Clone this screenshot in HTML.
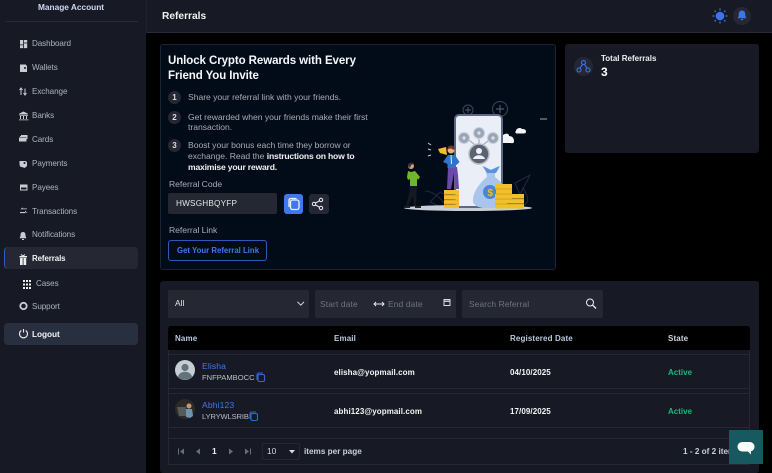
<!DOCTYPE html>
<html><head><meta charset="utf-8"><style>
*{box-sizing:border-box;margin:0;padding:0}
html,body{width:772px;height:473px;overflow:hidden;background:#000;font-family:"Liberation Sans",sans-serif;color:#fff}
.a{position:absolute}
.t{position:absolute;white-space:nowrap;line-height:12px}
.n{font-size:8.1px;color:#aeb3bf;left:32px;letter-spacing:-.08px}
svg{position:absolute;overflow:visible}
.g{font-size:8.6px;color:#a9acb4;letter-spacing:-.03px;left:188px}
.g b{letter-spacing:-.2px;color:#f2f2f2}
.num{position:absolute;left:168px;width:13px;height:13px;border-radius:50%;background:#252833;font-size:8px;font-weight:bold;line-height:13px;text-align:center;color:#ddd}
.th{font-size:8px;font-weight:bold;letter-spacing:.13px;color:#b9c8de}
.td{font-size:8px;font-weight:bold;color:#f4f4f4;letter-spacing:.08px}
.act{font-size:8px;font-weight:bold;color:#1fb57f}
</style></head><body>
<div class="a" style="left:0;top:0;width:146px;height:473px;background:#171a24"></div>
<div class="a" style="left:146px;top:0;width:626px;height:33px;background:#171a24;border-bottom:1px solid #2a2d38;border-left:1px solid #1f222c"></div>
<div class="a" style="left:146px;top:33px;width:626px;height:440px;background:#000"></div>
<div class="a" style="left:5px;top:21px;width:133px;height:1px;background:#282b36"></div>
<div class="t" style="left:38px;top:1px;font-size:8.3px;font-weight:bold;color:#cfd8f5;letter-spacing:0">Manage Account</div>

<div class="t n" style="top:38px">Dashboard</div>
<div class="t n" style="top:62px">Wallets</div>
<div class="t n" style="top:86px">Exchange</div>
<div class="t n" style="top:110px">Banks</div>
<div class="t n" style="top:134px">Cards</div>
<div class="t n" style="top:158px">Payments</div>
<div class="t n" style="top:182px">Payees</div>
<div class="t n" style="top:206px">Transactions</div>
<div class="t n" style="top:229px">Notifications</div>
<div class="a" style="left:4px;top:247px;width:134px;height:22px;background:#252833;border-radius:4px;border-left:1.5px solid #2f5fc0"></div>
<div class="t n" style="top:253px;color:#f2f2f2;font-weight:bold;font-size:7.9px">Referrals</div>
<div class="t n" style="top:278px;left:36px">Cases</div>
<div class="t n" style="top:301px">Support</div>
<div class="a" style="left:4px;top:323px;width:134px;height:22px;background:#283040;border-radius:4px"></div>
<div class="t n" style="top:328px;color:#f2f2f2;font-weight:bold;font-size:8.3px">Logout</div>

<svg style="left:0;top:0" width="146" height="350" fill="#c9ccd4">
<path d="M20 40h3.2v4.5H20zM24 40h3.2v2.6H24zM20 45.300h3.2v2.8H20zM24 43.400h3.2v4.7H24z"/>
<path d="M20 64.500h6v1h1v6.500h-7z"/><circle cx="25" cy="68" r="1" fill="#171a24"/>
<path d="M21 95v-6.500M19.500 90l1.500-2 1.500 2M25 88.500v6.500M23.500 93l1.500 2 1.500-2" fill="none" stroke="#c9ccd4" stroke-width="1"/>
<path d="M23.500 111.500l4.500 2.300v.7h-9v-.7zM19.500 115h8.500v.8h-8.500zM20 116h1v3h-1zM23 116h1v3h-1zM26 116h1v3h-1zM19 119.500h9.500v.8H19z"/>
<path d="M20 136h7v1h-7zM19 137.500h7.500v4H19z"/><path d="M21 135h6.500v4h-1v-3H21z"/>
<path d="M19.500 161h6l1.500 1v4.500h-1l-1 1.500-5-1.500-.5-2.500z"/><circle cx="24.500" cy="163" r="1" fill="#171a24"/>
<path d="M20 184.500h7.500v6H20z"/><rect x="21" y="187.500" width="5.500" height="2" fill="#171a24"/>
<path d="M20 212h5v-1.300l2.500 2-2.500-.2v.6h-5zM27 208.500h-4.500v-1.300l-2 2h6.500z"/>
<path d="M23 232c-2 0-2.500 1.500-2.500 3.200 0 1.800-.8 2.300-.8 3h6.600c0-.7-.8-1.200-.8-3 0-1.700-.5-3.200-2.500-3.200zM22 239h2v1h-2z"/>
<path d="M20 258h2.700v7H20zM23.500 258h2.700v7h-2.700zM19.500 256h7.500v1.500h-7.500z" fill="#eee"/>
<path d="M21 254.500l2 1.500 2-1.500" fill="none" stroke="#eee"/>
<g fill="#eee"><rect x="23" y="280" width="2" height="2"/><rect x="26" y="280" width="2" height="2"/><rect x="29" y="280" width="2" height="2"/><rect x="23" y="283.500" width="2" height="2"/><rect x="26" y="283.500" width="2" height="2"/><rect x="29" y="283.500" width="2" height="2"/><rect x="23" y="287" width="2" height="2"/><rect x="26" y="287" width="2" height="2"/><rect x="29" y="287" width="2" height="2"/></g>
<circle cx="23.500" cy="306" r="3.200" fill="none" stroke="#c9ccd4" stroke-width="1.800"/>
<path d="M21.300 330.500a4 4 0 1 0 4.400 0M23.500 329v3.500" fill="none" stroke="#eee" stroke-width="1.100"/>
</svg>

<div class="t" style="left:162px;top:10px;font-size:10.2px;font-weight:bold;color:#f2f2f2;line-height:13px">Referrals</div>
<svg style="left:710px;top:5px" width="50" height="24" fill="#3c74ec">
<circle cx="10" cy="11" r="4.300"/><path d="M10 3.500v2M10 16.500v2M2.500 11h2M15.500 11h2M4.500 5.500l1.400 1.400M14.100 15.100l1.400 1.400M4.500 16.500l1.400-1.400M14.100 6.900l1.400-1.400" stroke="#3c74ec" stroke-width="1.200"/>
<circle cx="32" cy="11" r="9" fill="#252833"/>
<path d="M32 5.500c-2.500 0-3.300 1.800-3.300 4 0 2.300-1 3-1 3.800h8.600c0-.8-1-1.500-1-3.800 0-2.200-.8-4-3.300-4zM30.700 14h2.600c0 .8-.6 1.300-1.300 1.300s-1.300-.5-1.300-1.300z"/>
</svg>

<!-- Promo card -->
<div class="a" style="left:160px;top:44px;width:396px;height:226px;background:#020b18;border:1px solid #1a2330;border-radius:3px"></div>
<div class="t" style="left:168px;top:53px;font-size:11.5px;font-weight:bold;color:#f6f8fa;line-height:15px;letter-spacing:-.08px;white-space:normal;width:200px;padding-top:1px">Unlock Crypto Rewards with Every<br>Friend You Invite</div>
<div class="num" style="top:91px">1</div>
<div class="num" style="top:111px">2</div>
<div class="num" style="top:139px">3</div>
<div class="t g" style="top:91px">Share your referral link with your friends.</div>
<div class="t g" style="top:111px">Get rewarded when your friends make their first</div>
<div class="t g" style="top:121px">transaction.</div>
<div class="t g" style="top:139px">Boost your bonus each time they borrow or</div>
<div class="t g" style="top:150px">exchange. Read the <b>instructions on how to</b></div>
<div class="t g" style="top:161px"><b>maximise your reward.</b></div>
<div class="t g" style="left:169px;top:178px">Referral Code</div>
<div class="a" style="left:168px;top:193px;width:109px;height:21px;background:#252833;border-radius:2px"></div>
<div class="t" style="left:176px;top:198px;font-size:8.2px;color:#e6e6e6;letter-spacing:.2px">HWSGHBQYFP</div>
<div class="a" style="left:284px;top:194px;width:19px;height:20px;background:#3f77f0;border-radius:3px"></div>
<div class="a" style="left:309px;top:194px;width:20px;height:20px;background:#252833;border-radius:3px"></div>
<svg style="left:284px;top:194px" width="46" height="20" fill="none" stroke="#eef" stroke-width="1">
<rect x="6.500" y="6" width="8.500" height="9.500" rx="2" stroke-width="1.300"/><path d="M5 13V6.500Q5 4.500 7 4.500h5.500" stroke-width="1.300"/>
<circle cx="30" cy="10" r="1.700"/><circle cx="37" cy="6" r="1.700"/><circle cx="37" cy="14" r="1.700"/><path d="M31.500 9l4-2.200M31.500 11l4 2.200"/>
</svg>
<div class="t g" style="left:169px;top:224px">Referral Link</div>
<div class="a" style="left:168px;top:240px;width:99px;height:21px;border:1px solid #2e58b8;border-radius:3px"></div>
<div class="t" style="left:177px;top:245px;font-size:7.8px;font-weight:bold;color:#3f77f0">Get Your Referral Link</div>

<!-- Illustration -->
<svg style="left:395px;top:85px" width="160" height="135" fill="none">
<circle cx="73" cy="25" r="5" stroke="#3a4a5c"/><path d="M73 22v6M70 25h6" stroke="#4e5a6a"/>
<circle cx="105" cy="24" r="7.500" stroke="#3a4a5c"/><path d="M105 20v8M101 24h8" stroke="#4e5a6a" stroke-width="1.200"/>
<path d="M145 34h7" stroke="#9aa"/>
<path d="M115 125c12-6 25-3 13-22l-6 14zM125 110l10-20-15 8z" stroke="#1f2b3a"/>
<path d="M35 117l10-10 13 8-10 8zM30 106c8 0 17 8 20 14" stroke="#1f2b3a"/>
<ellipse cx="73" cy="123" rx="64" ry="3" fill="#c9cfd8"/>
<rect x="60" y="30" width="47" height="92" rx="4" fill="#e9eef7" stroke="#5b6a84" stroke-width="2"/>
<path d="M121 46c0-3 5-4 6-2 3 0 4 1 4 2.500s-1 2-3 2h-6c-2 0-2-2-1-2.500zM108 50c3-2 6-2 6 1 3 0 5 2 5 5s-2 2-4 2h-7z" fill="#f2f4f8"/>
<path d="M84 63L70 52M84 63V50M84 63l14-11" stroke="#98a2b3"/>
<circle cx="84" cy="69" r="10" fill="#5b6270" stroke="#b6bcc8" stroke-width="1.500"/>
<circle cx="84" cy="66" r="3" fill="#eef"/><path d="M78 74c1-5 11-5 12 0z" fill="#eef"/>
<circle cx="69" cy="53" r="5.500" fill="#9aa5b8" stroke="#c9ced8"/><circle cx="84" cy="48" r="5.500" fill="#9aa5b8" stroke="#c9ced8"/><circle cx="98" cy="53" r="5.500" fill="#9aa5b8" stroke="#c9ced8"/>
<path d="M67 53h4M69 51v4M82 48h4M84 46v4M96 53h4M98 51v4" stroke="#fff" stroke-width=".8"/>
<path d="M87 81l8 4 9-4-4 7 0 4c8 6 14 16 13 24-1 6-5 7-13 7H88c-7-1-11-4-10-9 1-10 10-19 14-22l-1-5z" fill="#a9c5ec"/>
<path d="M88 81l8 4 9-4-4 7h-9z" fill="#5c92dc"/>
<circle cx="95" cy="107" r="7" fill="#4a86d8"/><text x="92.500" y="111" font-size="10" font-weight="bold" fill="#f5b92e" font-family="Liberation Sans">$</text>
<g fill="#f3bf2b"><rect x="100" y="99" width="17" height="5"/><rect x="101" y="104" width="16" height="5"/><rect x="100" y="109" width="17" height="5"/><rect x="100" y="114" width="29" height="4.500"/><rect x="100" y="119" width="29" height="4.500"/><rect x="114" y="109" width="15" height="4.500"/><rect x="49" y="105" width="15" height="4.500"/><rect x="49" y="110" width="15" height="4.500"/><rect x="49" y="115" width="15" height="4"/><rect x="49" y="119.500" width="15" height="3.500"/></g>
<path d="M100 104h17M101 109h16M100 114h29M100 119h29M49 110h15M49 115h15M49 119h15" stroke="#b98c18" stroke-width=".5"/>
<path d="M52 104l1-22h9l1 8 1 14h-3l-2-16-3 16z" fill="#6a4aa8"/>
<path d="M48 77l5-7h7l4.500 7-3 3-1-1v4h-8v-4z" fill="#2f74c8"/>
<path d="M56 70l.5 9" stroke="#cfe"/>
<circle cx="56" cy="65" r="3.500" fill="#e9ae8c"/><path d="M52.500 64c0-4 6-5 7.500-1l-1 2-3-1.500z" fill="#6a3a1c"/>
<path d="M43 64l8-2 1 8-7-2z" fill="#f3bf2b"/><path d="M36 65l-3-1M36 60l-3-2M36 70l-3 1" stroke="#ccd"/>
<path d="M13 86l3 1 4-1 5 6-2 3-1-2v8H15v-7l-2 1-1-3z" fill="#70b52e"/>
<path d="M15 101h7l-1 20-2 0-1-10-5 10-2-1 3-10z" fill="#141a20"/>
<circle cx="16" cy="81" r="3" fill="#d8a080"/><path d="M13 81c0-3 5-5 6-2l-3 1-1 3z" fill="#333"/>
<path d="M9 122h6M20 122h6" stroke="#222" stroke-width="2"/>
</svg>

<!-- Total card -->
<div class="a" style="left:565px;top:44px;width:194px;height:109px;background:#171a24;border-radius:3px"></div>
<svg style="left:574px;top:57px" width="20" height="20" fill="none" stroke="#3c74ec" stroke-width="1.100">
<circle cx="9.500" cy="9.500" r="9.500" fill="#252833" stroke="none"/><circle cx="9.500" cy="5.500" r="2"/><circle cx="5" cy="13" r="2"/><circle cx="14" cy="13" r="2"/><path d="M8.500 7.300l-2.500 4M10.500 7.300l2.500 4"/>
</svg>
<div class="t" style="left:601px;top:53px;font-size:8px;font-weight:bold;color:#eee">Total Referrals</div>
<div class="t" style="left:601px;top:66px;font-size:12px;font-weight:bold;color:#fff">3</div>

<!-- Table card -->
<div class="a" style="left:160px;top:281px;width:599px;height:192px;background:#171a24;border-radius:3px"></div>
<div class="a" style="left:168px;top:290px;width:141px;height:28px;background:#252833;border-radius:2px"></div>
<div class="t" style="left:175px;top:297px;font-size:8.4px;color:#e6e6e6">All</div>
<svg style="left:296px;top:300px" width="10" height="8" fill="none" stroke="#ddd"><path d="M1.500 1.800L4.800 5.200 8 1.800"/></svg>
<div class="a" style="left:315px;top:290px;width:141px;height:28px;background:#252833;border-radius:2px"></div>
<div class="t" style="left:320px;top:298px;font-size:8.4px;color:#70747f;letter-spacing:.15px">Start date</div>
<div class="t" style="left:388px;top:298px;font-size:8.4px;color:#70747f;letter-spacing:.15px">End date</div>
<svg style="left:373px;top:298px" width="80" height="12" fill="none" stroke="#eee">
<path d="M1 6h10M3 4L1 6l2 2M9 4l2 2-2 2" stroke-width=".9"/>
<rect x="71" y="1.500" width="6" height="6" stroke-width=".9"/><path d="M71 3.200h6" stroke-width="1.200"/>
</svg>
<div class="a" style="left:462px;top:290px;width:141px;height:28px;background:#252833;border-radius:2px"></div>
<div class="t" style="left:469px;top:298px;font-size:8.4px;color:#70747f;letter-spacing:.1px">Search Referral</div>
<svg style="left:585px;top:297px" width="13" height="13" fill="none" stroke="#eee" stroke-width="1"><circle cx="5" cy="5.500" r="3.500"/><path d="M7.700 8.200l3.300 3.300" stroke-width="1.300"/></svg>

<div class="a" style="left:168px;top:326px;width:582px;height:24px;background:#000;border-radius:3px 3px 0 0"></div>
<div class="a" style="left:168px;top:350px;width:582px;height:89px;border-left:1px solid #252833;border-right:1px solid #252833"></div>
<div class="a" style="left:168px;top:350px;width:582px;height:5px;border-bottom:1px solid #252833"></div>
<div class="a" style="left:168px;top:388px;width:582px;height:6px;border-top:1px solid #252833;border-bottom:1px solid #252833"></div>
<div class="a" style="left:168px;top:427px;width:582px;height:1px;background:#252833"></div>
<div class="a" style="left:168px;top:438px;width:582px;height:27px;border:1px solid #252833;border-radius:0 0 2px 2px"></div>
<div class="t th" style="left:175px;top:333px">Name</div>
<div class="t th" style="left:334px;top:333px">Email</div>
<div class="t th" style="left:510px;top:333px">Registered Date</div>
<div class="t th" style="left:668px;top:333px;color:#d0d4dc">State</div>

<svg style="left:175px;top:360px" width="20" height="20"><circle cx="10" cy="10" r="10" fill="#c5ced4"/><circle cx="10" cy="7.500" r="3.600" fill="#65727c"/><path d="M3 17c1-7 13-7 14 0a10 10 0 0 1-14 0z" fill="#65727c"/></svg>
<svg style="left:175px;top:399px" width="20" height="20"><circle cx="10" cy="10" r="10" fill="#2c2a27"/><path d="M2 8h9v9H4z" fill="#565a5c"/><circle cx="14" cy="7" r="2.500" fill="#c8977a"/><path d="M11 10h6l1 7-3 2-4-1z" fill="#6d95b0"/></svg>
<div class="t" style="left:202px;top:360px;font-size:8.6px;color:#3f77f0;letter-spacing:.1px">Elisha</div>
<div class="t" style="left:202px;top:372px;font-size:7.6px;color:#b9bdc6">FNFPAMBOCC</div>
<svg style="left:256px;top:372px" width="10" height="11" fill="none" stroke="#3568d0" stroke-width="1.100"><rect x="2" y="2.500" width="6.500" height="7" rx="1.500"/><path d="M1 8V3q0-2 2-2h4"/></svg>
<div class="t" style="left:202px;top:399px;font-size:8.6px;color:#3f77f0;letter-spacing:.1px">Abhi123</div>
<div class="t" style="left:202px;top:411px;font-size:7.6px;color:#b9bdc6;letter-spacing:-.15px">LYRYWLSRIB</div>
<svg style="left:249px;top:411px" width="10" height="11" fill="none" stroke="#3568d0" stroke-width="1.100"><rect x="2" y="2.500" width="6.500" height="7" rx="1.500"/><path d="M1 8V3q0-2 2-2h4"/></svg>

<div class="t td" style="left:334px;top:367px">elisha@yopmail.com</div>
<div class="t td" style="left:334px;top:406px">abhi123@yopmail.com</div>
<div class="t td" style="left:510px;top:367px">04/10/2025</div>
<div class="t td" style="left:510px;top:406px">17/09/2025</div>
<div class="t act" style="left:668px;top:367px">Active</div>
<div class="t act" style="left:668px;top:406px">Active</div>

<svg style="left:176px;top:446px" width="80" height="11" fill="#6a6e78">
<path d="M2 2.500h1v6H2zM8 2.500v6L4 5.500zM24 2.500v6L20 5.500zM53 2.500v6l4-3zM69 2.500v6l4-3zM74 2.500h1v6h-1z"/>
</svg>
<div class="t" style="left:212px;top:445px;font-size:8.4px;font-weight:bold;color:#f0f0f0">1</div>
<div class="a" style="left:262px;top:443px;width:38px;height:17px;border:1px solid #252833;border-radius:2px"></div>
<div class="t" style="left:267px;top:445px;font-size:8.4px;color:#d8d8d8">10</div>
<svg style="left:288px;top:449px" width="8" height="6" fill="#ddd"><path d="M1 1h6L4 4.500z"/></svg>
<div class="t" style="left:304px;top:446px;font-size:8.2px;font-weight:bold;color:#c9ced8">items per page</div>
<div class="t" style="left:683px;top:446px;font-size:8.2px;font-weight:bold;color:#c9ced8;width:46px;overflow:hidden">1 - 2 of 2 items</div>

<div class="a" style="left:729px;top:430px;width:34px;height:34px;background:#165a5f"></div>
<svg style="left:729px;top:430px" width="34" height="34" fill="#fff"><rect x="8.500" y="12" width="17" height="9.500" rx="4.700"/><path d="M19 21.500h3v3z"/></svg>
</body></html>
